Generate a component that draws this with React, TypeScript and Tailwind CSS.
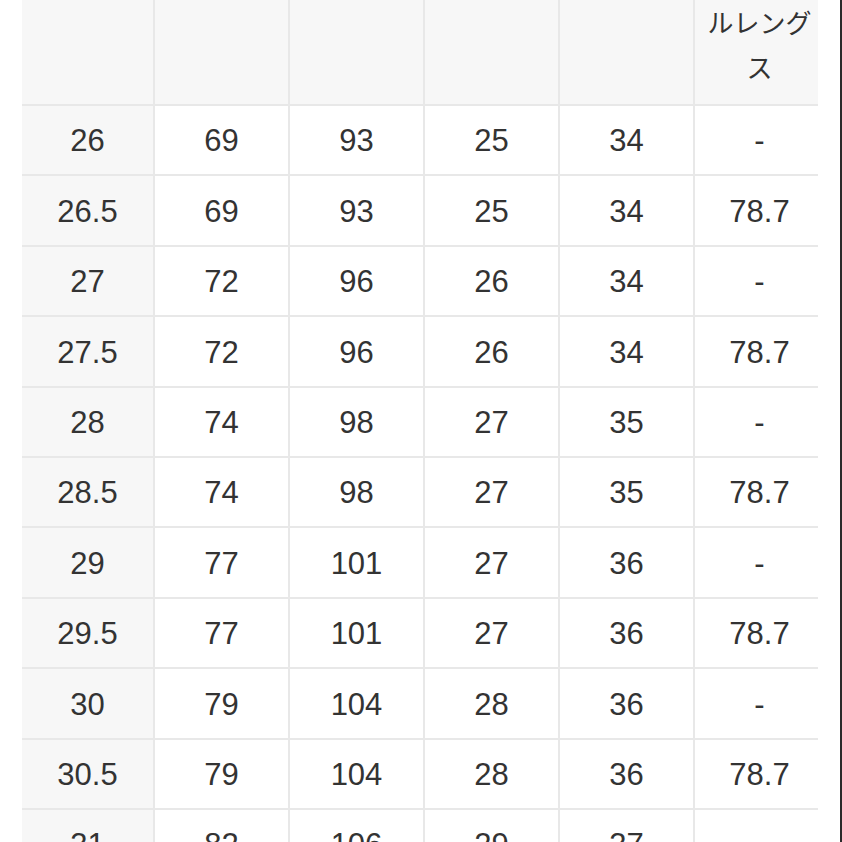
const rows = [
  ["26", "69", "93", "25", "34", "-"],
  ["26.5", "69", "93", "25", "34", "78.7"],
  ["27", "72", "96", "26", "34", "-"],
  ["27.5", "72", "96", "26", "34", "78.7"],
  ["28", "74", "98", "27", "35", "-"],
  ["28.5", "74", "98", "27", "35", "78.7"],
  ["29", "77", "101", "27", "36", "-"],
  ["29.5", "77", "101", "27", "36", "78.7"],
  ["30", "79", "104", "28", "36", "-"],
  ["30.5", "79", "104", "28", "36", "78.7"],
  ["31", "82", "106", "29", "37", "-"],
]

const cols = "grid grid-cols-[133px_135px_135px_135px_135px_123px]"

export default function App() {
  return (
    <div className="flex h-[842px] w-[842px] overflow-hidden bg-white font-['Liberation_Sans','Noto_Sans_CJK_JP',sans-serif] text-[#333]">
      <div className="ml-[22px] w-[796px]">
        {/* header row */}
        <div className={`${cols} h-[106px] border-b-2 border-[#e8e8e8] bg-[#f7f7f7]`}>
          {[0, 1, 2, 3, 4].map((i) => (
            <div key={i} className="border-r-2 border-[#e8e8e8]" />
          ))}
          <div className="flex flex-col items-center pl-[6px] pt-[2px] text-[26px] leading-[45px]">
            <span>ルレング</span>
            <span>ス</span>
          </div>
        </div>

        {/* body */}
        {rows.map((row, r) => (
          <div key={r} className={`${cols} h-[70.4px] border-b-2 border-[#e8e8e8]`}>
            {row.map((cell, c) => (
              <div
                key={c}
                className={`flex items-center justify-center pt-[3px] text-[31px] ${
                  c < 5 ? "border-r-2 border-[#e8e8e8]" : "pl-[6px]"
                } ${c === 0 ? "bg-[#f7f7f7]" : "bg-white"}`}
              >
                {cell}
              </div>
            ))}
          </div>
        ))}
      </div>
      <div className="ml-auto mr-0 w-[2px] bg-[#2a2a2a]" />
    </div>
  )
}
